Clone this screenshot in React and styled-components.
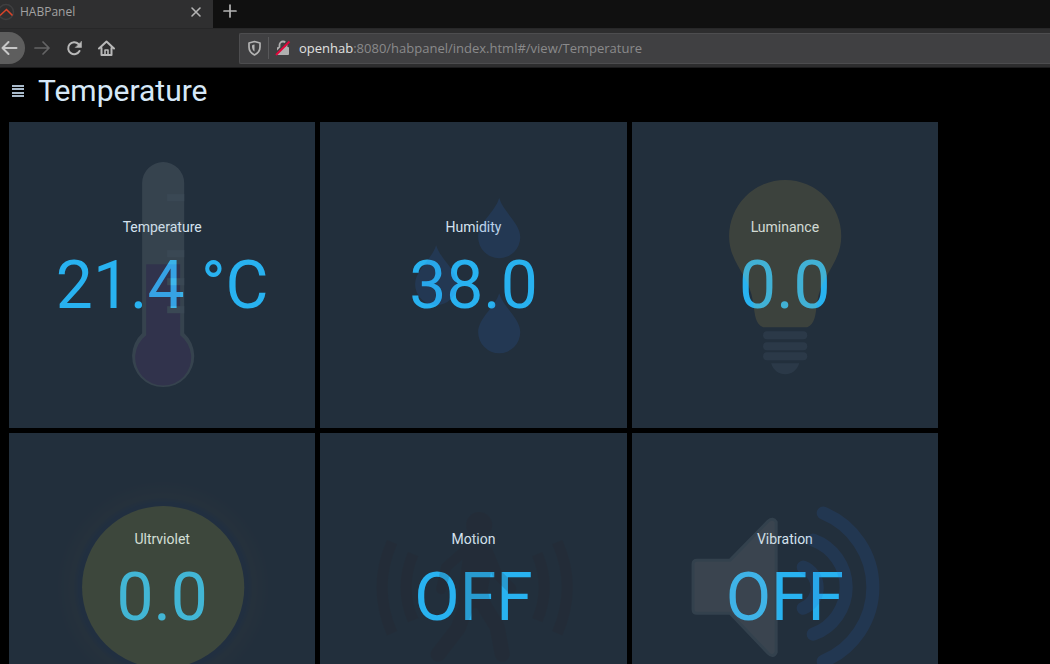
import React from "react";
import styled, { createGlobalStyle } from "styled-components";

const GlobalStyle = createGlobalStyle`
  * { box-sizing: border-box; }
  body { margin: 0; background: #000; font-family: Roboto, "Liberation Sans", sans-serif; }
  button { padding: 0; border: 0; background: none; color: inherit; display: flex; align-items: center; justify-content: center; }
`;

const Window = styled.div`
  height: 100vh;
  overflow: hidden;
  background: #000;
`;

const TabStrip = styled.div`
  display: flex;
  height: 28px;
  background: #101010;
`;

const Tab = styled.div`
  display: flex;
  align-items: center;
  width: 213px;
  padding: 0 8px 4px 0;
  background: #2f2f30;
  color: #a2a2a2;
  font: 12px/16px "Open Sans", sans-serif;
`;

const TabTitle = styled.span`
  flex: 1;
  padding-left: 5px;
`;

const TabButton = styled.button`
  width: ${(p) => p.$size}px;
  height: ${(p) => p.$size}px;
  color: #b4b4b4;
`;

const NewTab = styled(TabButton)`
  margin-left: 8px;
  height: 22px;
`;

const Toolbar = styled.div`
  display: flex;
  align-items: center;
  height: 40px;
  background: #2d2d2e;
  border-top: 1px solid #272728;
  border-bottom: 1px solid #1b1b1c;
`;

const NavButtons = styled.nav`
  display: flex;
  align-items: center;
  flex: none;
  width: 239px;
`;

const NavButton = styled.button`
  width: 32px;
  height: 32px;
  color: ${(p) => (p.$dim ? "#646465" : "#b8b8b8")};
`;

const BackButton = styled(NavButton)`
  width: 25px;
  justify-content: flex-start;
  border-radius: 0 16px 16px 0;
  background: #5e5e5e;
  color: #c8c8c8;
  margin-right: 1px;
`;

const AddressBar = styled.div`
  display: flex;
  align-items: center;
  flex: 1;
  height: 31px;
  padding-left: 6px;
  border: 1px solid #4d4d4f;
  border-right: 0;
  border-radius: 2px 0 0 2px;
  background: #404042;
`;

const Divider = styled.span`
  width: 1px;
  height: 22px;
  margin: 0 5px;
  background: #58585a;
`;

const Address = styled.a`
  margin-left: 7px;
  color: #8a8a8b;
  font: 13px/18px "Open Sans", sans-serif;
  text-decoration: none;
  white-space: nowrap;
`;

const Host = styled.span`
  color: #e0e0e0;
`;

const Header = styled.header`
  display: flex;
  align-items: center;
  height: 54px;
  padding: 0 0 8px 10px;
  color: #d6e8f8;
`;

const MenuButton = styled.button`
  width: 16px;
  height: 16px;
  color: #a9bacb;
`;

const Title = styled.h1`
  margin: 0 0 0 12px;
  font-size: 30px;
  line-height: 40px;
  font-weight: 400;
`;

const Board = styled.main`
  display: grid;
  grid-template-columns: repeat(3, 1fr);
  gap: 5px;
  padding: 0 112px 5px 9px;
`;

const Tile = styled.section`
  position: relative;
  aspect-ratio: 1;
  display: flex;
  flex-direction: column;
  align-items: center;
  justify-content: center;
  padding-bottom: 20px;
  background: #222f3c;
`;

const Label = styled.h2`
  margin: 16px 0 8px;
  color: #d5e2ee;
  font-size: 14px;
  line-height: 18px;
  font-weight: 400;
`;

const Value = styled.div`
  color: #28b2f0;
  font-size: 66px;
  line-height: 84px;
  white-space: nowrap;
`;

const Backdrop = styled.svg`
  position: absolute;
  inset: 0;
  width: 100%;
  height: 100%;
  opacity: 0.15;
  pointer-events: none;
`;

const Thermometer = () => (
  <>
    <path d="M133 61a21 21 0 0 1 42 0V211A31 31 0 1 1 133 211Z" fill="#a9b4b8" />
    <path d="M137 142H171V213A28 28 0 1 1 137 213Z" fill="#874aa6" />
    <g fill="#c0d4dc">
      {[72, 100, 128, 156, 184].map((y) => (
        <rect key={y} x="158" y={y} width="17" height="7" />
      ))}
    </g>
  </>
);

const drop = "c4 14 21 25 21 39a21 21 0 0 1-42 0c0-14 17-25 21-39Z";
const Drops = () => (
  <path fill="#2a6bd5" d={`M179 76${drop}M116 123${drop}M179 171${drop}`} />
);

const Bulb = () => (
  <>
    <path fill="#d2ae44" d="M153 58a56 56 0 0 1 56 56c0 27-20 38-24 66-2 14-2 21-10 25h-44c-8-4-8-11-10-25-4-28-24-39-24-66a56 56 0 0 1 56-56Z" />
    <g fill="#5f7690">
      {[209, 220, 230].map((y) => (
        <rect key={y} x="131" y={y} width="44" height="8" rx="4" />
      ))}
      <path d="M139 241h28c-2 7-8 11-14 11s-12-4-14-11Z" />
    </g>
  </>
);

const Sun = () => (
  <>
    <defs>
      <radialGradient id="halo" cx="154" cy="154" r="110" gradientUnits="userSpaceOnUse">
        <stop offset="0.77" stopColor="#1c3664" stopOpacity="0.7" />
        <stop offset="0.82" stopColor="#4c4a40" stopOpacity="0.6" />
        <stop offset="1" stopColor="#4c4a40" stopOpacity="0" />
      </radialGradient>
    </defs>
    <circle cx="154" cy="154" r="110" fill="url(#halo)" />
    <circle cx="154" cy="154" r="81" fill="#d8d042" />
  </>
);

const Walker = () => (
  <g fill="none" stroke="#2e2124" strokeLinecap="round" strokeLinejoin="round">
    <circle cx="159" cy="92" r="13" fill="#2e2124" stroke="none" />
    <path d="M148 114h14l8 10-6 33 3 13-18 2-8-6 5-40Z" fill="#2e2124" strokeWidth="7" />
    <path strokeWidth="10" d="M145 117l-19 17-5 22M168 119l9 22 14 14" />
    <path strokeWidth="15" d="M148 168l-10 27-20 26M160 166l17 28 5 27" />
    <g strokeWidth="11" strokeLinecap="butt">
      <path d="M72 109q-20 45 0 91M237 109q20 45 0 91" />
      <path d="M93 121q-14 33 0 66M217 121q14 33 0 66" />
    </g>
  </g>
);

const Speaker = () => (
  <>
    <path
      d="M65 127H98L136 88Q141 84 144 89V219Q141 225 136 220L98 180H65Q61 180 61 176V131Q61 127 65 127Z"
      fill="#c0beba"
      stroke="#94a7b0"
      strokeWidth="3"
    />
    <g fill="none" stroke="#2864ca" strokeWidth="13" strokeLinecap="round">
      <path d="M191 80a80 80 0 0 1 0 148" />
      <path d="M181 107a50 50 0 0 1 0 94" />
      <path d="M171 134a22 22 0 0 1 0 41" />
    </g>
  </>
);

const tiles = [
  { label: "Temperature", value: "21.4 °C", Art: Thermometer },
  { label: "Humidity", value: "38.0", Art: Drops },
  { label: "Luminance", value: "0.0", Art: Bulb },
  { label: "Ultrviolet", value: "0.0", Art: Sun },
  { label: "Motion", value: "OFF", Art: Walker },
  { label: "Vibration", value: "OFF", Art: Speaker },
];

const Stroke = ({ w = 18, d, sw = 2, children }) => (
  <svg width={w} height={w} viewBox="0 0 18 18" fill="none" stroke="currentColor" strokeWidth={sw} strokeLinecap="round" strokeLinejoin="round">
    <path d={d} />
    {children}
  </svg>
);

export default function App() {
  return (
    <Window>
      <GlobalStyle />
      <TabStrip>
        <Tab>
          <svg width="15" height="18" viewBox="0 0 15 18" fill="none">
            <circle cx="6" cy="9" r="7.5" stroke="#3f3f40" strokeWidth="1.5" />
            <path d="M0 12.500L6.500 6.500l6 6" stroke="#d8442a" strokeWidth="1.6" />
          </svg>
          <TabTitle>HABPanel</TabTitle>
          <TabButton $size={18} aria-label="Close tab">
            <Stroke d="M5 5l8 8M13 5l-8 8" sw={1.6} />
          </TabButton>
        </Tab>
        <NewTab $size={18} aria-label="New tab">
          <Stroke d="M9 3v12M3 9h12" sw={1.7} />
        </NewTab>
      </TabStrip>
      <Toolbar>
        <NavButtons>
          <BackButton aria-label="Back">
            <Stroke d="M2.500 9h14M8.500 3l-6 6 6 6" />
          </BackButton>
          <NavButton $dim aria-label="Forward">
            <Stroke d="M2 9h14M10 3l6 6-6 6" sw={1.7} />
          </NavButton>
          <NavButton aria-label="Reload">
            <Stroke d="M14.500 12a6 6 0 1 1-1-7l1 1">
              <path d="M16.500 2.500v6h-6Z" fill="currentColor" strokeWidth="0.5" />
            </Stroke>
          </NavButton>
          <NavButton aria-label="Home">
            <Stroke d="M2 9.500l7.500-7 7.500 7M4.500 9v7h10V9">
              <path d="M8 15.500v-4.500h3v4.500" strokeWidth="1.6" />
            </Stroke>
          </NavButton>
        </NavButtons>
        <AddressBar>
          <svg width="17" height="18" viewBox="0 0 17 18" fill="none" stroke="#b4b4b4" strokeLinejoin="round">
            <path d="M8.500 2.500l5.500 1.500v4c0 4-2.500 6.500-5.500 8-3-1.500-5.500-4-5.500-8V4Z" strokeWidth="1.7" />
            <path d="M8.500 5.500c-2 .3-2.500.7-2.500 1.500 0 3 1 4.500 2.500 5.500Z" fill="#b4b4b4" stroke="none" />
          </svg>
          <Divider />
          <svg width="18" height="18" viewBox="0 0 18 18" fill="none">
            <path d="M5.500 9V6a3.500 3.500 0 0 1 7 0v3" stroke="#b0b0b0" strokeWidth="1.8" />
            <rect x="3" y="8" width="12" height="8" rx="1" fill="#b0b0b0" />
            <path d="M1 15L14 2" stroke="#404042" strokeWidth="2" />
            <path d="M2 16L15.500 2.500" stroke="#e2063c" strokeWidth="2" />
          </svg>
          <Address href="#/view/Temperature">
            <Host>openhab</Host>:8080/habpanel/index.html#/view/Temperature
          </Address>
        </AddressBar>
      </Toolbar>
      <Header>
        <MenuButton aria-label="Menu">
          <svg width="12" height="14" viewBox="0 0 12 14" fill="currentColor">
            <path d="M0 1h12v2H0zM0 4h12v2H0zM0 8h12v2H0zM0 11h12v2H0z" />
          </svg>
        </MenuButton>
        <Title>Temperature</Title>
      </Header>
      <Board>
        {tiles.map(({ label, value, Art }) => (
          <Tile key={label}>
            <Label>{label}</Label>
            <Value>{value}</Value>
            <Backdrop viewBox="0 0 306 306" aria-hidden="true">
              <Art />
            </Backdrop>
          </Tile>
        ))}
      </Board>
    </Window>
  );
}
